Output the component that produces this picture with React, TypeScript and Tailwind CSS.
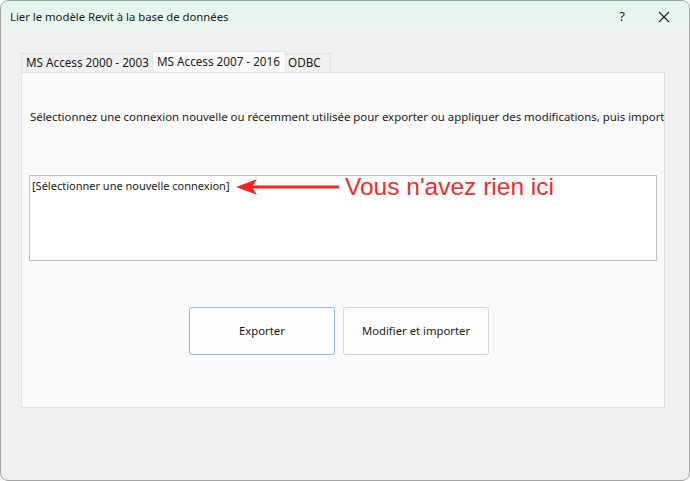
import React from "react";

export default function App() {
  const ui = { fontFamily: '"Noto Sans", "Open Sans", sans-serif' };
  return (
    <div className="w-[690px] h-[481px] bg-white" style={ui}>
      <div className="w-[690px] h-[481px] border border-[#a3a3a3] rounded-[8px] overflow-hidden bg-[#f0f0f0] flex flex-col">
        {/* Title bar */}
        <div className="h-[31px] shrink-0 bg-gradient-to-b from-[#e2f5ec] to-[#ecf6f1] flex items-center pl-[9px] text-[#1a1a1a]">
          <span className="text-[11.3px] leading-none">Lier le modèle Revit à la base de données</span>
          <span className="ml-auto w-[20px] text-center text-[13px] leading-none mr-[26px]">?</span>
          <svg width="12" height="12" viewBox="0 0 12 12" className="mr-[19px]">
            <path d="M1 1 L11 11 M11 1 L1 11" stroke="#1a1a1a" strokeWidth="1.1" fill="none" />
          </svg>
        </div>

        {/* Body */}
        <div className="flex flex-col pl-[20px] pr-[24px] pt-[19px]">
          {/* Tabs */}
          <div className="flex items-end h-[21px] text-[11.7px] text-[#1a1a1a]">
            <div className="h-[19px] w-[131px] flex items-center pl-[4px] border-t border-l border-[#e0e0e0] bg-[#f0f0f0] whitespace-nowrap">MS Access 2000 - 2003</div>
            <div className="h-[21px] w-[134px] flex items-center pl-[4px] bg-[#fafafa] border-t border-l border-r border-[#e3e3e3] whitespace-nowrap">MS Access 2007 - 2016</div>
            <div className="h-[19px] w-[45px] flex items-center pl-[2px] border-t border-r border-[#e0e0e0] bg-[#f0f0f0]">ODBC</div>
          </div>
          {/* Panel */}
          <div className="h-[336px] bg-[#fafafa] border border-[#e3e3e3] overflow-hidden flex flex-col">
            <div className="pt-[37px] pl-[8px] whitespace-nowrap text-[11.4px] text-[#1a1a1a] leading-[14px]">
              Sélectionnez une connexion nouvelle ou récemment utilisée pour exporter ou appliquer des modifications, puis importez
            </div>
            <div className="mt-[51px] mx-[7px] h-[86px] bg-white border border-[#bfc3c6] relative">
              <div className="pl-[2px] pt-[3px] text-[11px] text-[#1a1a1a] leading-[14px]">[Sélectionner une nouvelle connexion]</div>
              <div className="absolute left-[206px] top-[-1px] flex items-center">
                <svg width="104" height="20" viewBox="0 0 104 20">
                  <path d="M0 10 L21 2 L17 8.5 L103 8.5 L103 11.5 L17 11.5 L21 18 Z" fill="#f52525" />
                </svg>
                <span className="ml-[5px] text-[24.5px] leading-none text-[#f52a2a] whitespace-nowrap" style={{ fontFamily: '"Liberation Sans", Arial, sans-serif' }}>
                  Vous n'avez rien ici
                </span>
              </div>
            </div>
            <div className="mt-[46px] ml-[167px] flex gap-[8px] text-[11.3px] text-[#1a1a1a]">
              <div className="w-[146px] h-[48px] flex items-center justify-center bg-[#fdfdfd] border border-[#8fbbe8] rounded-[3px]">Exporter</div>
              <div className="w-[146px] h-[48px] flex items-center justify-center bg-[#fdfdfd] border border-[#d5d5d5] rounded-[3px]">Modifier et importer</div>
            </div>
          </div>
        </div>
      </div>
    </div>
  );
}
